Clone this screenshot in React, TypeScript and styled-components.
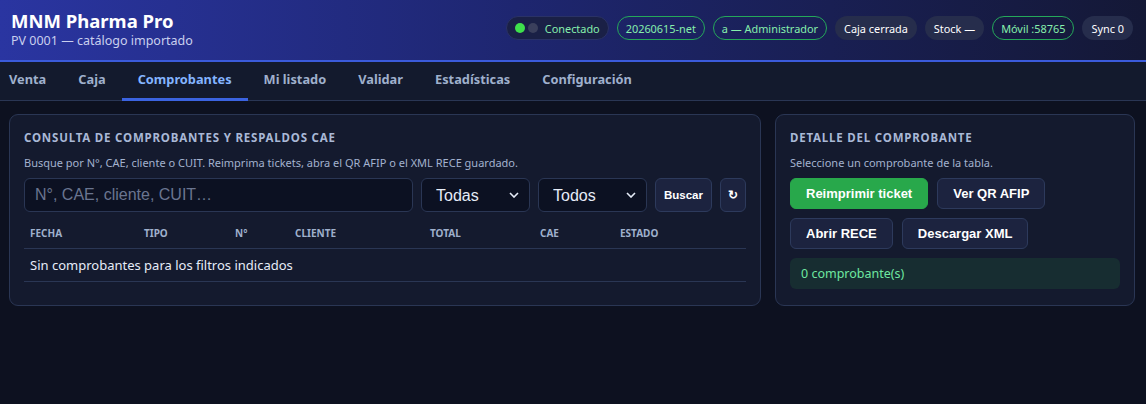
import React from 'react';
import styled, { createGlobalStyle } from 'styled-components';

const colors = {
    page: '#0d1120',
    card: '#141a2e',
    cardBorder: '#2a3654',
    nav: '#131a2d',
    text: '#e6ecf8',
    muted: '#a3b2cf',
    heading: '#a9b8d6',
    tab: '#9fb0cc',
    tabActive: '#84b4ff',
    accent: '#3b63e0',
    green: '#28a84b',
    greenText: '#86efac',
    chip: '#262d4c',
};

const GlobalStyle = createGlobalStyle`
    html, body {
        margin: 0;
        padding: 0;
        background: ${colors.page};
        color: ${colors.text};
        font-family: 'Noto Sans', 'Open Sans', sans-serif;
    }
    * {
        box-sizing: border-box;
    }
`;

const Shell = styled.div`
    min-height: 404px;
    background: ${colors.page};
`;

const Header = styled.header`
    height: 62px;
    display: flex;
    align-items: center;
    justify-content: space-between;
    padding: 0 13px 4px 11px;
    background: linear-gradient(90deg, #2a35a1 0%, #1e2670 45%, #141836 100%);
    border-bottom: 2px solid #3b5bdb;
`;

const Brand = styled.div`
    display: flex;
    flex-direction: column;
    margin-top: 2px;
`;

const Title = styled.h1`
    margin: 0;
    font-size: 18.5px;
    line-height: 24px;
    font-weight: 700;
    color: #ffffff;
`;

const Subtitle = styled.div`
    font-size: 12.5px;
    line-height: 16px;
    color: #c9cfee;
`;

const Chips = styled.div`
    display: flex;
    align-items: center;
    gap: 8px;
`;

const Chip = styled.span<{ $tone?: 'green' | 'plain' | 'status' }>`
    display: inline-flex;
    align-items: center;
    gap: 7px;
    height: 24px;
    padding: 0 8px;
    border-radius: 12px;
    font-size: 10.9px;
    white-space: nowrap;
    color: ${({ $tone }) => ($tone === 'plain' ? '#ffffff' : colors.greenText)};
    background: ${({ $tone }) =>
        $tone === 'plain' ? colors.chip : $tone === 'status' ? '#1a2046' : 'transparent'};
    border: 1px solid
        ${({ $tone }) => ($tone === 'green' ? '#25a85a' : $tone === 'status' ? '#2a3266' : 'transparent')};
`;

const Dot = styled.span<{ $on?: boolean }>`
    width: 10px;
    height: 10px;
    border-radius: 50%;
    background: ${({ $on }) => ($on ? '#3ee04c' : '#3a3f5c')};
`;

const Dots = styled.span`
    display: inline-flex;
    gap: 3px;
`;

const Nav = styled.nav`
    display: flex;
    height: 39px;
    background: ${colors.nav};
    border-bottom: 1px solid ${colors.cardBorder};
`;

const Tab = styled.div<{ $active?: boolean }>`
    display: flex;
    align-items: center;
    padding: 0 16px 2px;
    font-size: 12.8px;
    font-weight: 700;
    color: ${({ $active }) => ($active ? colors.tabActive : colors.tab)};
    border-bottom: 3px solid ${({ $active }) => ($active ? colors.accent : 'transparent')};
    margin-bottom: -1px;

    &:first-child {
        padding-left: 9px;
    }
`;

const Main = styled.main`
    display: grid;
    grid-template-columns: 1fr 360px;
    gap: 14px;
    padding: 13px 11px 0 9px;
`;

const Card = styled.section`
    background: ${colors.card};
    border: 1px solid ${colors.cardBorder};
    border-radius: 9px;
    padding: 14px;
`;

const CardTitle = styled.h2`
    margin: 0 0 8px;
    font-size: 11.5px;
    line-height: 18px;
    font-weight: 700;
    letter-spacing: 0.8px;
    text-transform: uppercase;
    color: ${colors.heading};
`;

const Hint = styled.p`
    margin: 0 0 8px;
    font-size: 11px;
    line-height: 15px;
    color: ${colors.muted};
`;

const SearchRow = styled.div`
    display: flex;
    gap: 8px;
`;

const SearchInput = styled.input`
    flex: 1;
    min-width: 0;
    height: 34px;
    padding: 0 10px;
    background: #0c1122;
    border: 1px solid ${colors.cardBorder};
    border-radius: 6px;
    color: ${colors.text};
    font-family: 'Liberation Sans', Arial, sans-serif;
    font-size: 16px;

    &::placeholder {
        color: #6a7590;
    }
`;

const chevron =
    "data:image/svg+xml;utf8,<svg xmlns='http://www.w3.org/2000/svg' width='10' height='6' viewBox='0 0 10 6'><path d='M1 1l4 4 4-4' fill='none' stroke='%23e6ecf8' stroke-width='1.6'/></svg>";

const Select = styled.select`
    appearance: none;
    width: 109px;
    height: 34px;
    padding: 0 14px;
    background: #0c1122 url("${chevron}") no-repeat right 10px center;
    border: 1px solid ${colors.cardBorder};
    border-radius: 6px;
    color: ${colors.text};
    font-family: 'Liberation Sans', Arial, sans-serif;
    font-size: 16px;
`;

const Button = styled.button<{ $primary?: boolean; $compact?: boolean }>`
    height: ${({ $compact }) => ($compact ? '34px' : '31px')};
    padding: ${({ $compact }) => ($compact ? '0 8px' : '0 15px')};
    border-radius: 6px;
    border: 1px solid ${({ $primary }) => ($primary ? colors.green : '#2d3a5c')};
    background: ${({ $primary }) => ($primary ? colors.green : '#1c233f')};
    color: #ffffff;
    font-family: 'Liberation Sans', Arial, sans-serif;
    font-size: ${({ $compact }) => ($compact ? '11.5px' : '13px')};
    font-weight: 700;
    white-space: nowrap;
`;

const IconButton = styled(Button)`
    padding: 0 7px;
    font-size: 12px;
`;

const Table = styled.table`
    width: 100%;
    margin: 8px 0 9px;
    border-collapse: collapse;
    font-size: 10px;
`;

const Th = styled.th<{ $w: number }>`
    width: ${({ $w }) => $w}px;
    text-align: left;
    padding: 6px 6px 8px;
    line-height: 14px;
    font-weight: 700;
    text-transform: uppercase;
    color: ${colors.tab};
    border-bottom: 1px solid ${colors.cardBorder};
`;

const Td = styled.td`
    padding: 7px 6px;
    font-size: 13px;
    line-height: 18px;
    color: ${colors.text};
    border-bottom: 1px solid ${colors.cardBorder};
`;

const ActionGrid = styled.div`
    display: flex;
    flex-wrap: wrap;
    gap: 9px;
    margin-right: 50px;
`;

const Status = styled.div`
    margin-top: 9px;
    height: 31px;
    display: flex;
    align-items: center;
    padding: 0 11px;
    border-radius: 6px;
    background: #172d31;
    color: #6ee7a0;
    font-size: 12.5px;
`;

const tabs = ['Venta', 'Caja', 'Comprobantes', 'Mi listado', 'Validar', 'Estadísticas', 'Configuración'];

const columns: [string, number][] = [
    ['Fecha', 114],
    ['Tipo', 91],
    ['N°', 60],
    ['Cliente', 135],
    ['Total', 110],
    ['CAE', 80],
    ['Estado', 132],
];

const App = () => {
    return (
        <Shell>
            <GlobalStyle />
            <Header>
                <Brand>
                    <Title>MNM Pharma Pro</Title>
                    <Subtitle>PV 0001 — catálogo importado</Subtitle>
                </Brand>
                <Chips>
                    <Chip $tone="status">
                        <Dots>
                            <Dot $on />
                            <Dot />
                        </Dots>
                        Conectado
                    </Chip>
                    <Chip $tone="green">20260615-net</Chip>
                    <Chip $tone="green">a — Administrador</Chip>
                    <Chip $tone="plain">Caja cerrada</Chip>
                    <Chip $tone="plain">Stock —</Chip>
                    <Chip $tone="green">Móvil :58765</Chip>
                    <Chip $tone="plain">Sync 0</Chip>
                </Chips>
            </Header>
            <Nav>
                {tabs.map((tab) => (
                    <Tab key={tab} $active={tab === 'Comprobantes'}>
                        {tab}
                    </Tab>
                ))}
            </Nav>
            <Main>
                <Card>
                    <CardTitle>Consulta de comprobantes y respaldos CAE</CardTitle>
                    <Hint>Busque por N°, CAE, cliente o CUIT. Reimprima tickets, abra el QR AFIP o el XML RECE guardado.</Hint>
                    <SearchRow>
                        <SearchInput placeholder="N°, CAE, cliente, CUIT…" />
                        <Select defaultValue="Todas">
                            <option>Todas</option>
                        </Select>
                        <Select defaultValue="Todos">
                            <option>Todos</option>
                        </Select>
                        <Button $compact>Buscar</Button>
                        <IconButton $compact>↻</IconButton>
                    </SearchRow>
                    <Table>
                        <thead>
                            <tr>
                                {columns.map(([label, w]) => (
                                    <Th key={label} $w={w}>
                                        {label}
                                    </Th>
                                ))}
                            </tr>
                        </thead>
                        <tbody>
                            <tr>
                                <Td colSpan={7}>Sin comprobantes para los filtros indicados</Td>
                            </tr>
                        </tbody>
                    </Table>
                </Card>
                <Card>
                    <CardTitle>Detalle del comprobante</CardTitle>
                    <Hint>Seleccione un comprobante de la tabla.</Hint>
                    <ActionGrid>
                        <Button $primary>Reimprimir ticket</Button>
                        <Button>Ver QR AFIP</Button>
                        <Button>Abrir RECE</Button>
                        <Button>Descargar XML</Button>
                    </ActionGrid>
                    <Status>0 comprobante(s)</Status>
                </Card>
            </Main>
        </Shell>
    );
};

export default App;
